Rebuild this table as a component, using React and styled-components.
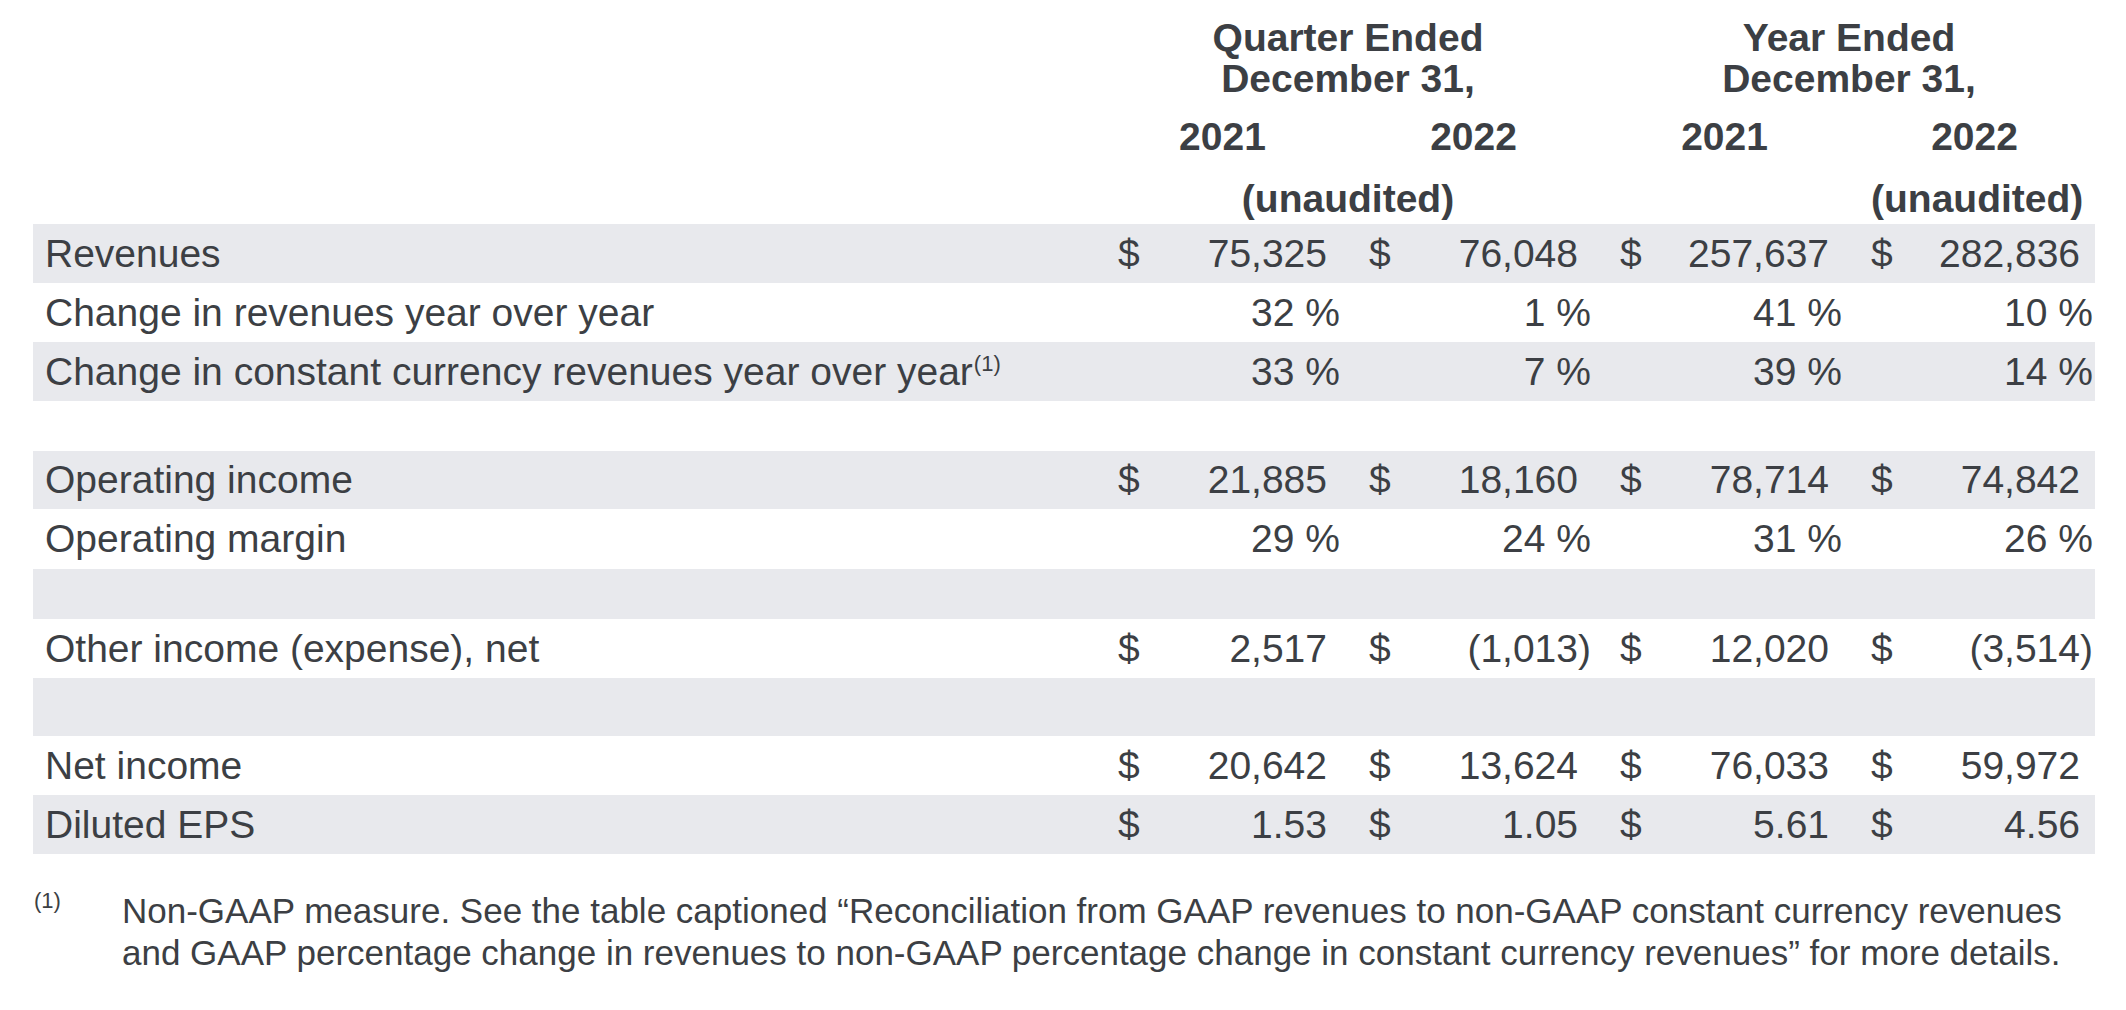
import styled, { createGlobalStyle } from "styled-components";

const GlobalStyle = createGlobalStyle`
  html, body {
    margin: 0;
    padding: 0;
    background: #ffffff;
  }
  body {
    font-family: "Liberation Sans", Arial, Helvetica, sans-serif;
    color: #3c3f44;
  }
`;

const Page = styled.div`
  padding: 17px 31px 0 33px;
`;

const Table = styled.table`
  width: 2062px;
  border-collapse: collapse;
  border-spacing: 0;
  table-layout: fixed;
  font-size: 39px;
`;

const HeadCell = styled.th`
  font-size: 39px;
  font-weight: bold;
  line-height: 41px;
  text-align: center;
  padding: 0 ${(p) => (p.$last ? 17 : 42)}px 0 0;
  height: ${(p) => p.$h || 41}px;
  vertical-align: middle;
  white-space: nowrap;
`;

const Row = styled.tr`
  background: ${(p) => (p.$shaded ? "#e8e9ed" : "#ffffff")};
  height: ${(p) => p.$h || 59}px;
`;

const Label = styled.td`
  padding: 0 0 0 12px;
  vertical-align: middle;
  white-space: nowrap;
  line-height: 44px;
`;

const Sup = styled.sup`
  font-size: 22px;
  line-height: 0;
  vertical-align: 14px;
  margin-left: 1px;
`;

const ValueTd = styled.td`
  padding: 0 ${(p) => (p.$last ? 2 : 29)}px 0 0;
  vertical-align: middle;
  line-height: 44px;
`;

const ValueBox = styled.div`
  display: flex;
  justify-content: space-between;
  align-items: baseline;
  white-space: nowrap;
`;

const Dollar = styled.span``;

const Amount = styled.span`
  display: flex;
  align-items: baseline;
`;

const Hang = styled.span`
  display: inline-block;
  width: 13px;
  text-align: left;
`;

const Footnote = styled.div`
  display: grid;
  grid-template-columns: 89px 1fr;
  margin-top: 36px;
  font-size: 35px;
  line-height: 42px;
`;

const NoteMark = styled.div`
  font-size: 22px;
  line-height: 22px;
  padding-left: 1px;
`;

const NoteLine = styled.div`
  white-space: nowrap;
`;

const rows = [
  { label: "Revenues", shaded: true, values: [["$", "75,325"], ["$", "76,048"], ["$", "257,637"], ["$", "282,836"]] },
  { label: "Change in revenues year over year", values: [["", "32 %", "pct"], ["", "1 %", "pct"], ["", "41 %", "pct"], ["", "10 %", "pct"]] },
  { label: "Change in constant currency revenues year over year", note: true, shaded: true, values: [["", "33 %", "pct"], ["", "7 %", "pct"], ["", "39 %", "pct"], ["", "14 %", "pct"]] },
  { blank: true, h: 50 },
  { label: "Operating income", shaded: true, h: 58, values: [["$", "21,885"], ["$", "18,160"], ["$", "78,714"], ["$", "74,842"]] },
  { label: "Operating margin", h: 60, values: [["", "29 %", "pct"], ["", "24 %", "pct"], ["", "31 %", "pct"], ["", "26 %", "pct"]] },
  { blank: true, shaded: true, h: 50 },
  { label: "Other income (expense), net", values: [["$", "2,517"], ["$", "(1,013", "neg"], ["$", "12,020"], ["$", "(3,514", "neg"]] },
  { blank: true, shaded: true, h: 58 },
  { label: "Net income", values: [["$", "20,642"], ["$", "13,624"], ["$", "76,033"], ["$", "59,972"]] },
  { label: "Diluted EPS", shaded: true, values: [["$", "1.53"], ["$", "1.05"], ["$", "5.61"], ["$", "4.56"]] },
];

function Value({ v, last }) {
  const [cur, num, kind] = v;
  return (
    <ValueTd $last={last}>
      <ValueBox>
        <Dollar>{cur}</Dollar>
        <Amount>
          {num}
          {kind !== "pct" && <Hang>{kind === "neg" ? ")" : ""}</Hang>}
        </Amount>
      </ValueBox>
    </ValueTd>
  );
}

export default function App() {
  return (
    <>
      <GlobalStyle />
      <Page>
        <Table>
          <colgroup>
            <col style={{ width: 1085 }} />
            <col style={{ width: 251 }} />
            <col style={{ width: 251 }} />
            <col style={{ width: 251 }} />
            <col style={{ width: 224 }} />
          </colgroup>
          <thead>
            <tr>
              <HeadCell />
              <HeadCell colSpan={2} $h={82}>
                Quarter Ended
                <br />
                December 31,
              </HeadCell>
              <HeadCell colSpan={2} $last $h={82}>
                Year Ended
                <br />
                December 31,
              </HeadCell>
            </tr>
            <tr>
              <HeadCell $h={74} />
              <HeadCell>2021</HeadCell>
              <HeadCell>2022</HeadCell>
              <HeadCell>2021</HeadCell>
              <HeadCell $last>2022</HeadCell>
            </tr>
            <tr>
              <HeadCell $h={51} />
              <HeadCell colSpan={2}>(unaudited)</HeadCell>
              <HeadCell />
              <HeadCell $last>(unaudited)</HeadCell>
            </tr>
          </thead>
          <tbody>
            {rows.map((r, i) =>
              r.blank ? (
                <Row key={i} $shaded={r.shaded} $h={r.h}>
                  <Label colSpan={5} />
                </Row>
              ) : (
                <Row key={i} $shaded={r.shaded} $h={r.h}>
                  <Label>
                    {r.label}
                    {r.note && <Sup>(1)</Sup>}
                  </Label>
                  {r.values.map((v, j) => (
                    <Value key={j} v={v} last={j === 3} />
                  ))}
                </Row>
              )
            )}
          </tbody>
        </Table>
        <Footnote>
          <NoteMark>(1)</NoteMark>
          <div>
            <NoteLine>
              Non-GAAP measure. See the table captioned “Reconciliation from GAAP revenues to non-GAAP constant currency revenues
            </NoteLine>
            <NoteLine>
              and GAAP percentage change in revenues to non-GAAP percentage change in constant currency revenues” for more details.
            </NoteLine>
          </div>
        </Footnote>
      </Page>
    </>
  );
}
